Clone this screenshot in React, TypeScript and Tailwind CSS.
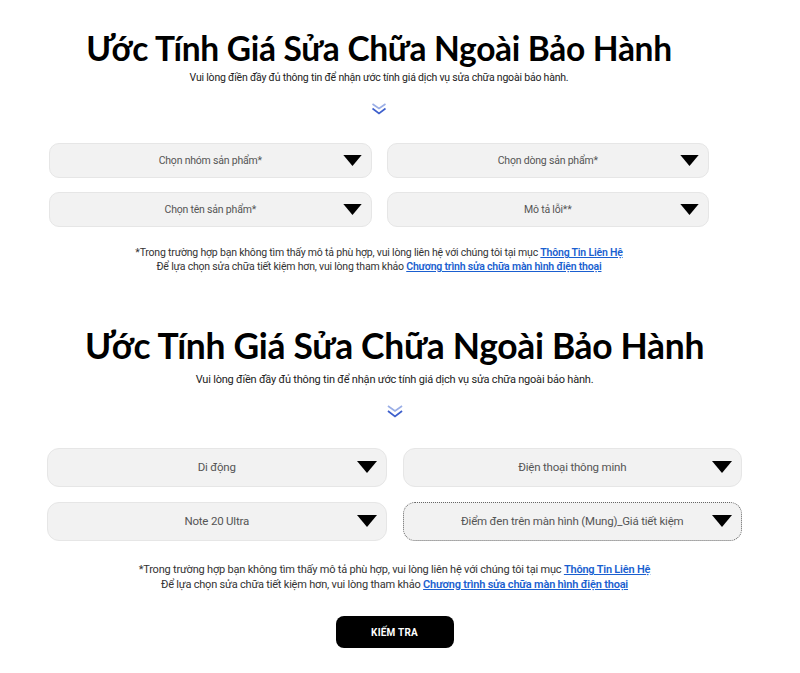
import React from "react";

const titleFont = { fontFamily: "Lato, 'Noto Sans', sans-serif" };

const Tri = ({ className }: { className: string }) => (
  <svg viewBox="0 0 20 12" className={className}>
    <path d="M0 0H20L10 12Z" fill="#000" />
  </svg>
);

const Chevrons = ({ className }: { className: string }) => (
  <svg viewBox="0 0 16 12" className={className} fill="none" strokeWidth="1.6">
    <path d="M1.5 1L8 5.5L14.5 1" stroke="#9aaee6" />
    <path d="M1.5 5.5L8 10.5L14.5 5.5" stroke="#3d5fcc" />
  </svg>
);

type Field = { label: string; dashed?: boolean };

const Select = ({ f, big }: { f: Field; big?: boolean }) => (
  <div
    className={
      "relative flex items-center justify-center bg-[#f2f2f2] " +
      (big ? "h-[39px] rounded-[12px] " : "h-[35px] rounded-[10px] ") +
      (f.dashed ? "border border-dotted border-[#666]" : "border border-[#e6e6e6]")
    }
  >
    <span className={"text-[#555] tracking-[-0.2px] " + (big ? "text-[11.5px]" : "text-[10.5px]")}>
      {f.label}
    </span>
    <Tri
      className={
        big
          ? "absolute right-[9px] top-[12px] w-[20px] h-[12px]"
          : "absolute right-[9px] top-[11px] w-[19px] h-[11px]"
      }
    />
  </div>
);

const Notes = ({ big }: { big?: boolean }) => (
  <div
    className={
      "text-center text-[#333] tracking-[-0.2px] " +
      (big ? "text-[11px] leading-[15px] mt-[21px]" : "text-[10.5px] leading-[14px] mt-[19px]")
    }
  >
    <div>
      *Trong trường hợp bạn không tìm thấy mô tả phù hợp, vui lòng liên hệ với chúng tôi tại mục{" "}
      <a className="text-[#1a5fd0] underline font-semibold">Thông Tin Liên Hệ</a>
    </div>
    <div>
      Để lựa chọn sửa chữa tiết kiệm hơn, vui lòng tham khảo{" "}
      <a className="text-[#1a5fd0] underline font-semibold">Chương trình sửa chữa màn hình điện thoại</a>
    </div>
  </div>
);

export default function App() {
  const top: Field[] = [
    { label: "Chọn nhóm sản phẩm*" },
    { label: "Chọn dòng sản phẩm*" },
    { label: "Chọn tên sản phẩm*" },
    { label: "Mô tả lỗi**" },
  ];
  const bottom: Field[] = [
    { label: "Di động" },
    { label: "Điện thoại thông minh" },
    { label: "Note 20 Ultra" },
    { label: "Điểm đen trên màn hình (Mung)_Giá tiết kiệm", dashed: true },
  ];

  return (
    <div className="w-[800px] h-[673px] bg-white overflow-hidden" style={{ fontFamily: "Roboto, 'Noto Sans', sans-serif" }}>
      {/* first block */}
      <section className="ml-[49px] w-[660px] pt-[28px]">
        <h1 className="text-center text-[33.5px] leading-[40px] font-bold text-black tracking-[-0.3px]" style={titleFont}>
          Ước Tính Giá Sửa Chữa Ngoài Bảo Hành
        </h1>
        <p className="mt-[4px] text-center text-[10.5px] leading-[12px] text-[#222] tracking-[-0.2px]">
          Vui lòng điền đầy đủ thông tin để nhận ước tính giá dịch vụ sửa chữa ngoài bảo hành.
        </p>
        <div className="mt-[19px] flex justify-center">
          <Chevrons className="w-[16px] h-[12px]" />
        </div>
        <div className="mt-[28px] grid grid-cols-2 gap-x-[15px] gap-y-[14px]">
          {top.map((f) => (
            <Select key={f.label} f={f} />
          ))}
        </div>
        <Notes />
      </section>

      {/* second block */}
      <section className="ml-[47px] w-[695px] mt-[51px]">
        <h1 className="text-center text-[35.4px] leading-[42px] font-bold text-black tracking-[-0.3px]" style={titleFont}>
          Ước Tính Giá Sửa Chữa Ngoài Bảo Hành
        </h1>
        <p className="mt-[6px] text-center text-[11px] leading-[13px] text-[#222] tracking-[-0.2px]">
          Vui lòng điền đầy đủ thông tin để nhận ước tính giá dịch vụ sửa chữa ngoài bảo hành.
        </p>
        <div className="mt-[19px] flex justify-center">
          <Chevrons className="w-[18px] h-[13px]" />
        </div>
        <div className="mt-[30px] grid grid-cols-2 gap-x-[16px] gap-y-[15px]">
          {bottom.map((f) => (
            <Select key={f.label} f={f} big />
          ))}
        </div>
        <Notes big />
        <div className="mt-[24px] flex justify-center">
          <button className="w-[118px] h-[32px] rounded-[8px] bg-black text-white text-[10px] font-bold tracking-[0.2px]">
            KIẾM TRA
          </button>
        </div>
      </section>
    </div>
  );
}
